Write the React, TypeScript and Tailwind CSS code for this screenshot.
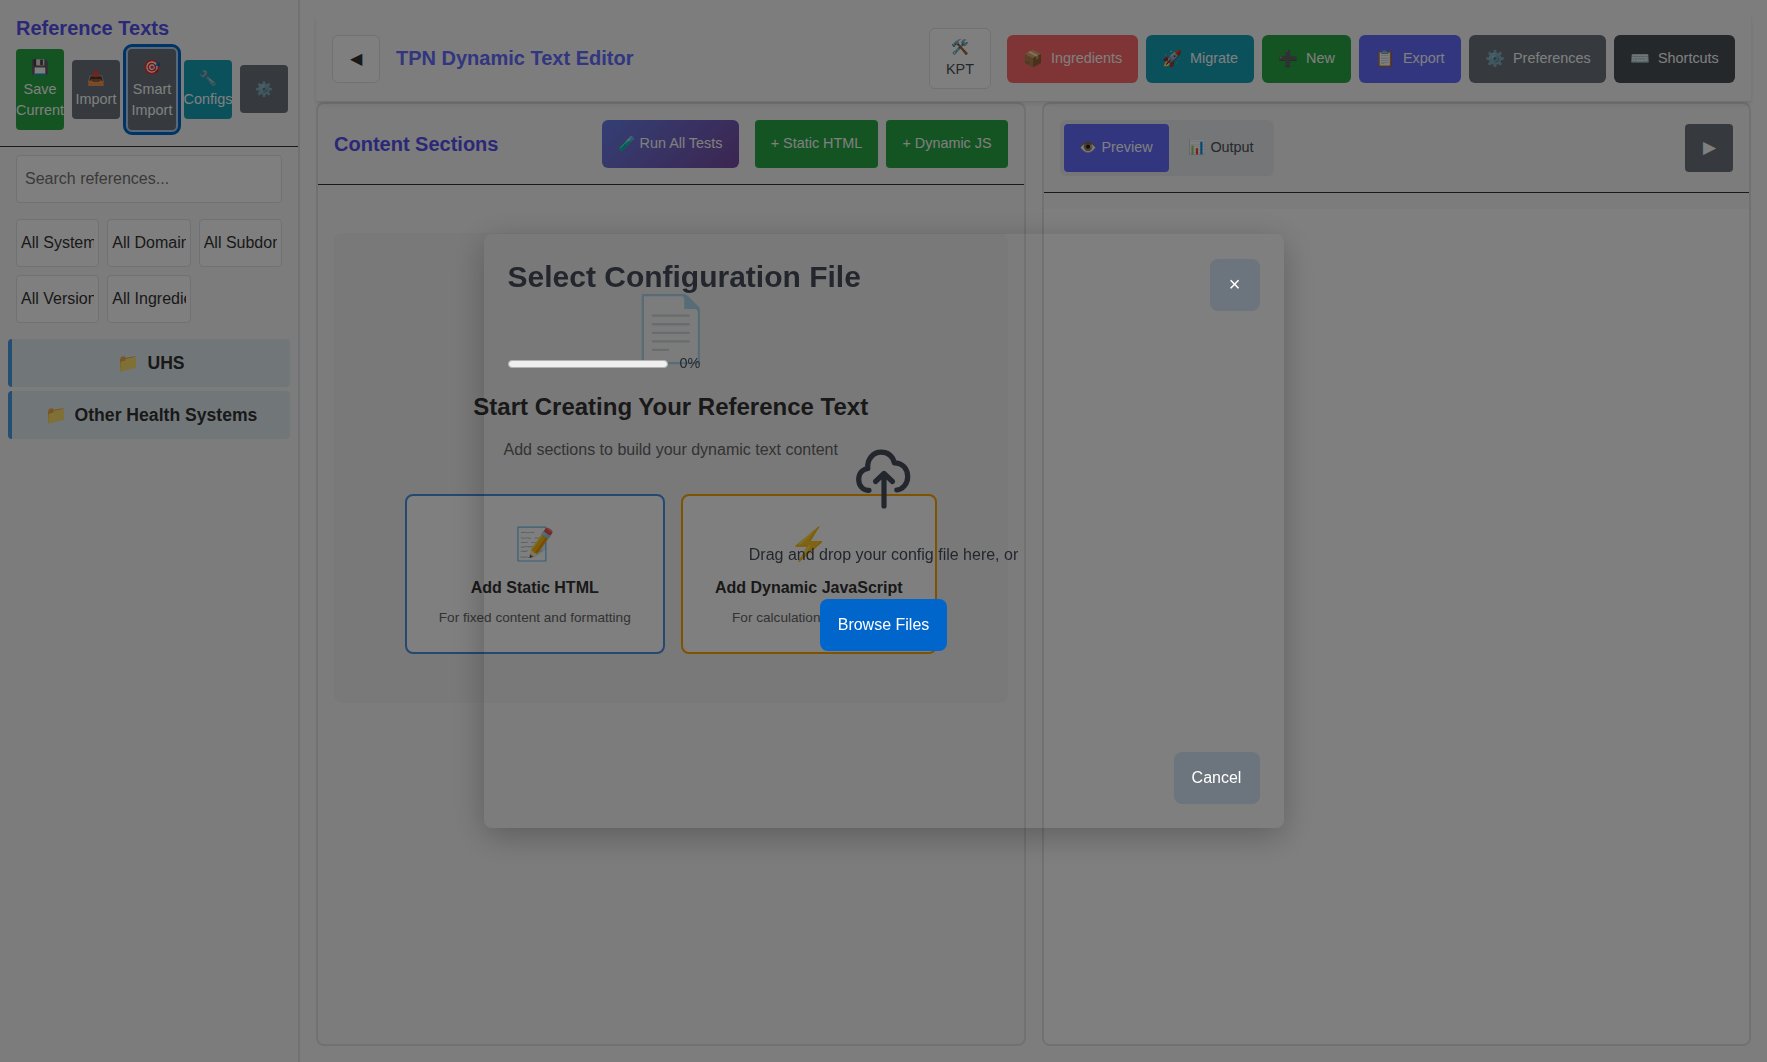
import React from 'react';

type ActionProps = { icon: string; label: string; className: string };

const headerActions: ActionProps[] = [
  { icon: '📦', label: 'Ingredients', className: 'w-[131px] bg-[#ff6b6b]' },
  { icon: '🚀', label: 'Migrate', className: 'w-[108px] bg-[#17a2b8]' },
  { icon: '➕', label: 'New', className: 'w-[89px] bg-[#28a745]' },
  { icon: '📋', label: 'Export', className: 'w-[102px] bg-[#646cff]' },
  { icon: '⚙️', label: 'Preferences', className: 'w-[137px] bg-[#6c757d]' },
  { icon: '⌨️', label: 'Shortcuts', className: 'w-[121px] bg-[#495057]' },
];

const sidebarActions: ActionProps[] = [
  { icon: '💾', label: 'Save Current', className: 'bg-[#28a745]' },
  { icon: '📥', label: 'Import', className: 'bg-[#6c757d]' },
  {
    icon: '🎯',
    label: 'Smart Import',
    className: 'bg-[#6c757d] outline-3 outline-offset-2 outline-[#0066cc] shadow-[0_0_0_2px_#b3d1f0]',
  },
  { icon: '🔧', label: 'Configs', className: 'bg-[#17a2b8]' },
];

const filters = ['All Systems', 'All Domains', 'All Subdomains', 'All Versions', 'All Ingredients'];

function Sidebar() {
  return (
    <aside className="flex h-full w-[300px] shrink-0 flex-col border-r-2 border-[#dee2e6] bg-[#f8f8f8]">
      <div className="flex h-[147px] flex-col border-b border-[#333] pt-[13px] pl-4">
        <h2 className="text-[20px] leading-[30px] font-bold text-[#5550ee]">Reference Texts</h2>
        <div className="mt-[6px] flex items-center gap-2">
          {sidebarActions.map((a) => (
            <button
              key={a.label}
              className={`flex w-12 flex-col items-center rounded-[4px] py-2 text-center text-[14.4px] leading-[21.6px] text-white ${a.className}`}
            >
              <span>{a.icon}</span>
              <span>{a.label}</span>
            </button>
          ))}
          <button className="size-12 rounded-[4px] bg-[#6c757d] text-[14.4px] text-white">⚙️</button>
        </div>
      </div>
      <div className="mt-2 ml-4 flex h-12 w-[266px] items-center rounded-[4px] border border-[#dee2e6] bg-white px-2 text-[16px] text-[#757575]">
        Search references...
      </div>
      <div className="mt-4 ml-4 grid w-[266px] grid-cols-3 gap-2">
        {filters.map((f) => (
          <div key={f} className="flex h-12 items-center rounded-[4px] border border-[#dee2e6] bg-white px-1 text-[16px] text-[#333]">
            <span className="w-full overflow-hidden whitespace-nowrap">{f}</span>
          </div>
        ))}
      </div>
      <div className="mt-4 ml-2 flex w-[282px] flex-col gap-1">
        {['UHS', 'Other Health Systems'].map((s) => (
          <div
            key={s}
            className="flex h-12 items-center justify-center gap-2 rounded-[4px] border-l-4 border-[#4a9de6] bg-[#e3eef2] text-[17.6px] font-bold text-[#333]"
          >
            <span>📁</span>
            <span>{s}</span>
          </div>
        ))}
      </div>
    </aside>
  );
}

function Header() {
  return (
    <header className="relative flex h-[86px] shrink-0 items-center border-b border-[#dee2e6] bg-[#fafafa] px-4 shadow-[0_2px_4px_rgba(0,0,0,0.1)]">
      <button className="h-12 w-12 rounded-[6px] border border-[#dee2e6] bg-white text-[16px] text-[#333]">◀</button>
      <h1 className="ml-4 pb-[2px] text-[20px] font-bold text-[#646cff]">TPN Dynamic Text Editor</h1>
      <div className="ml-auto flex items-center">
        <button className="mr-4 flex h-[61px] w-[62px] flex-col items-center justify-center rounded-[6px] border border-[#dee2e6] bg-white text-[14.4px] leading-[21.6px] text-[#495057]">
          <span>🛠️</span>
          <span>KPT</span>
        </button>
        <div className="flex gap-2">
          {headerActions.map((a) => (
            <button
              key={a.label}
              className={`flex h-12 items-center gap-2 rounded-[6px] pl-4 text-[14.4px] text-white ${a.className}`}
            >
              <span className="text-[16px]">{a.icon}</span>
              <span>{a.label}</span>
            </button>
          ))}
        </div>
      </div>
    </header>
  );
}

function ContentPanel() {
  return (
    <section className="flex flex-1 flex-col overflow-hidden rounded-[8px] border-2 border-[#dee2e6] bg-[#f8f8f8]">
      <div className="flex h-[81px] items-center border-b border-[#333] px-4">
        <h2 className="text-[20px] font-bold text-[#5550ee]">Content Sections</h2>
        <div className="ml-auto flex text-[14.4px] text-white">
          <button className="mr-4 h-12 w-[137px] rounded-[6px] bg-linear-135 from-[#667eea] to-[#764ba2]">🧪 Run All Tests</button>
          <button className="mr-2 h-12 w-[123px] rounded-[4px] bg-[#28a745] pl-px">+ Static HTML</button>
          <button className="h-12 w-[122px] rounded-[4px] bg-[#28a745] pl-px">+ Dynamic JS</button>
        </div>
      </div>
      <div className="mx-4 mt-12 flex h-[470px] flex-col items-center rounded-[8px] bg-[#f3f3f3]">
        <div className="mt-12 h-[96px] text-[64px] leading-[96px] opacity-50">📄</div>
        <h3 className="mt-[12px] text-[24px] leading-[36px] font-bold text-[#333]">Start Creating Your Reference Text</h3>
        <p className="mt-[13px] text-[16px] leading-6 text-[#666]">Add sections to build your dynamic text content</p>
        <div className="mt-[32px] flex gap-4">
          <button className="flex h-[160px] w-[260px] flex-col items-center rounded-[8px] border-2 border-[#4a90e2] bg-white pt-6">
            <span className="text-[32px] leading-[48px]">📝</span>
            <span className="mt-2 text-[16px] leading-6 font-bold text-[#333]">Add Static HTML</span>
            <span className="mt-2 text-[13.6px] leading-5 text-[#666]">For fixed content and formatting</span>
          </button>
          <button className="flex h-[160px] w-[256px] flex-col items-center rounded-[8px] border-2 border-[#ffa500] bg-white pt-6">
            <span className="text-[32px] leading-[48px]">⚡</span>
            <span className="mt-2 text-[16px] leading-6 font-bold text-[#333]">Add Dynamic JavaScript</span>
            <span className="mt-2 text-[13.6px] leading-5 text-[#666]">For calculations and logic</span>
          </button>
        </div>
      </div>
    </section>
  );
}

function PreviewPanel() {
  return (
    <section className="flex flex-1 flex-col overflow-hidden rounded-[8px] border-2 border-[#dee2e6] bg-[#f8f8f8]">
      <div className="flex h-[89px] items-center border-b border-[#333] px-4">
        <div className="flex h-14 w-[214px] items-center gap-1 rounded-[6px] bg-[#e9ecef] px-1 text-[14.4px]">
          <button className="h-12 w-[105px] shrink-0 rounded-[4px] bg-[#646cff] text-white">👁️ Preview</button>
          <button className="h-12 w-[97px] shrink-0 text-[#495057]">📊 Output</button>
        </div>
        <button className="ml-auto size-12 rounded-[4px] bg-[#6c757d] text-[17px] text-white">▶</button>
      </div>
      <div className="mt-4 flex-1 bg-white" />
    </section>
  );
}

function CloudUpload() {
  return (
    <svg width="64" height="64" viewBox="-3.5 0 64 64" fill="none" stroke="#23272d" strokeWidth="5.2" strokeLinecap="round" strokeLinejoin="round">
      <path d="M13.5 44.300C7 44.800 3.200 39 3.200 33.500C3.200 27.500 7 23.300 12.300 22.500C11.300 13 18 6.200 25.500 6.200C32 6.200 37 10 38.800 16.800C47 16.800 52.200 23 52.200 30.500C52.200 38 47 43.500 41.300 44" />
      <path d="M28.500 60V27.500M20 35.500L28.500 27.500L37 35.500" />
    </svg>
  );
}

function FileDialog() {
  return (
    <div className="fixed inset-0 flex items-center justify-center bg-black/50">
      <div className="flex h-[594px] w-[800px] flex-col rounded-[8px] px-6 pt-[25px] pb-6 shadow-[0_8px_32px_rgba(0,0,0,0.25)]">
        <div className="flex h-[95px] items-start justify-between">
          <h2 className="text-[30px] leading-[36px] font-bold text-[#23272d]">Select Configuration File</h2>
          <button className="h-[52px] w-[50px] rounded-[8px] bg-[#6c757d] pb-[2px] text-[20px] text-white">×</button>
        </div>
        <div className="flex h-5 items-center gap-3 text-[14.4px] text-[#23272d]">
          <div className="h-2 w-[160px] rounded-[4px] border border-[#b2b2b2] bg-[#efefef]" />
          <span>0%</span>
        </div>
        <div className="mt-[72px] flex flex-col items-center">
          <CloudUpload />
          <p className="mt-[33px] text-[16px] leading-6 text-[#23272d]">Drag and drop your config file here, or</p>
          <button className="mt-8 h-[52px] w-[127px] rounded-[8px] bg-[#0066cc] text-[16px] text-white">Browse Files</button>
        </div>
        <button className="mt-auto h-[52px] w-[86px] shrink-0 self-end rounded-[8px] bg-[#6c757d] text-[16px] text-white">Cancel</button>
      </div>
    </div>
  );
}

export default function App() {
  return (
    <div className="flex h-screen w-full overflow-hidden bg-[#fbfbfb] font-['Liberation_Sans',Arial,sans-serif]">
      <Sidebar />
      <main className="flex min-w-0 flex-1 flex-col p-4">
        <Header />
        <div className="flex min-h-0 flex-1 gap-4">
          <ContentPanel />
          <PreviewPanel />
        </div>
      </main>
      <FileDialog />
    </div>
  );
}
